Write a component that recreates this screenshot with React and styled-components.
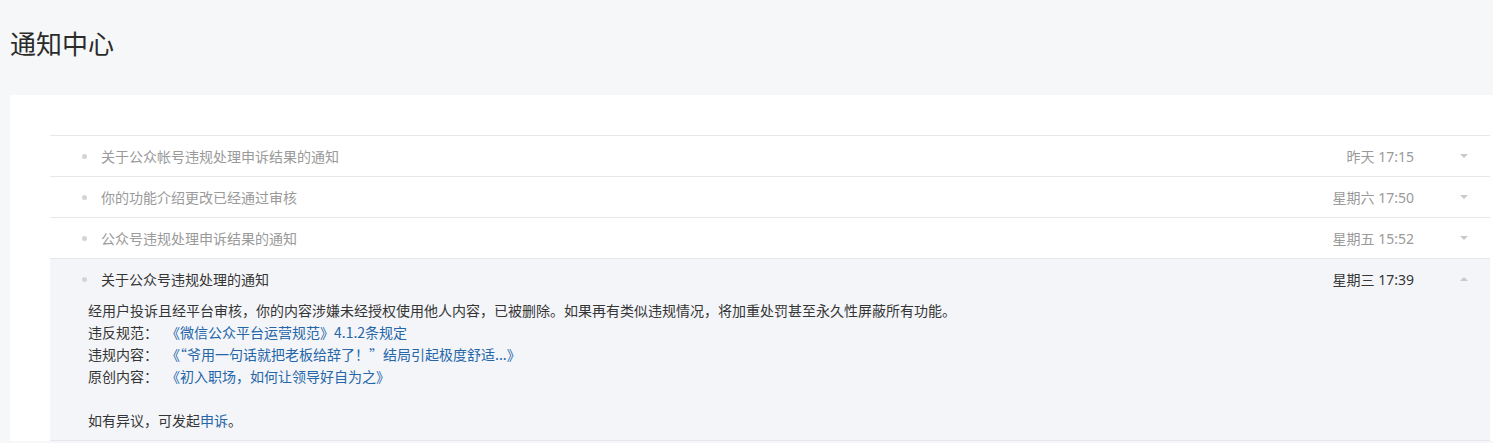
import React from 'react';
import styled, { createGlobalStyle } from 'styled-components';

const GlobalStyle = createGlobalStyle`
  html, body {
    margin: 0;
    padding: 0;
    background: #f6f7f9;
    overflow: hidden;
  }
  body {
    font-family: "Noto Sans", "Noto Sans CJK SC", sans-serif;
    color: #353535;
  }
`;

const Page = styled.div`
  padding: 24px 0 0 10px;
`;

const Title = styled.h1`
  margin: 0;
  font-size: 26px;
  font-weight: 400;
  line-height: 38px;
  color: #2b2b2b;
  font-family: "Noto Sans CJK SC", sans-serif;
`;

const Card = styled.div`
  margin-top: 33px;
  width: 1440px;
  padding: 40px 40px 0;
  background: #fff;
`;

const List = styled.ul`
  list-style: none;
  margin: 0;
  padding: 0;
  border-top: 1px solid #e7e7eb;
`;

const Item = styled.li`
  border-bottom: 1px solid #e7e7eb;
  background: ${p => (p.$open ? '#f4f5f9' : '#fff')};
`;

const Header = styled.div`
  display: flex;
  align-items: center;
  height: 40px;
  padding: 0 22px 0 32px;
  font-size: 14px;
  color: ${p => (p.$open ? '#353535' : '#9a9a9a')};
`;

const Dot = styled.span`
  width: 5px;
  height: 5px;
  border-radius: 50%;
  background: #d4d4d4;
  margin-right: 14px;
  flex: none;
`;

const Subject = styled.span`
  flex: 1;
  font-family: "Noto Sans CJK SC", sans-serif;
`;

const Time = styled.span`
  margin-right: 46px;
  font-family: "Noto Sans", "Noto Sans CJK SC", sans-serif;
`;

const Arrow = styled.svg`
  width: 8px;
  height: 4px;
  flex: none;
  fill: #c9c9c9;
`;

const Body = styled.div`
  padding: 0 0 9px 38px;
  font-size: 14px;
  line-height: 22px;
  color: #353535;
  font-family: "Noto Sans CJK SC", sans-serif;
`;

const Line = styled.p`
  margin: 0;
  min-height: 22px;
`;

const Link = styled.a`
  color: #2466a8;
  text-decoration: none;
  margin-left: ${p => (p.$gap ? '15px' : '0')};
`;

const notices = [
  { subject: '关于公众帐号违规处理申诉结果的通知', time: '昨天 17:15' },
  { subject: '你的功能介绍更改已经通过审核', time: '星期六 17:50' },
  { subject: '公众号违规处理申诉结果的通知', time: '星期五 15:52' },
  { subject: '关于公众号违规处理的通知', time: '星期三 17:39', open: true },
];

const Notice = ({ subject, time, open }) => (
  <Item $open={open}>
    <Header $open={open}>
      <Dot />
      <Subject>{subject}</Subject>
      <Time>{time}</Time>
      <Arrow viewBox="0 0 8 4">
        {open ? <polygon points="0,4 8,4 4,0" /> : <polygon points="0,0 8,0 4,4" />}
      </Arrow>
    </Header>
    {open && (
      <Body>
        <Line>
          经用户投诉且经平台审核，你的内容涉嫌未经授权使用他人内容，已被删除。如果再有类似违规情况，将加重处罚甚至永久性屏蔽所有功能。
        </Line>
        <Line>
          违反规范：<Link $gap>《微信公众平台运营规范》4.1.2条规定</Link>
        </Line>
        <Line>
          违规内容：<Link $gap>《“爷用一句话就把老板给辞了！”结局引起极度舒适...》</Link>
        </Line>
        <Line>
          原创内容：<Link $gap>《初入职场，如何让领导好自为之》</Link>
        </Line>
        <Line />
        <Line>
          如有异议，可发起<Link>申诉</Link>。
        </Line>
      </Body>
    )}
  </Item>
);

export default function App() {
  return (
    <Page>
      <GlobalStyle />
      <Title>通知中心</Title>
      <Card>
        <List>
          {notices.map(n => (
            <Notice key={n.subject} {...n} />
          ))}
        </List>
      </Card>
    </Page>
  );
}
